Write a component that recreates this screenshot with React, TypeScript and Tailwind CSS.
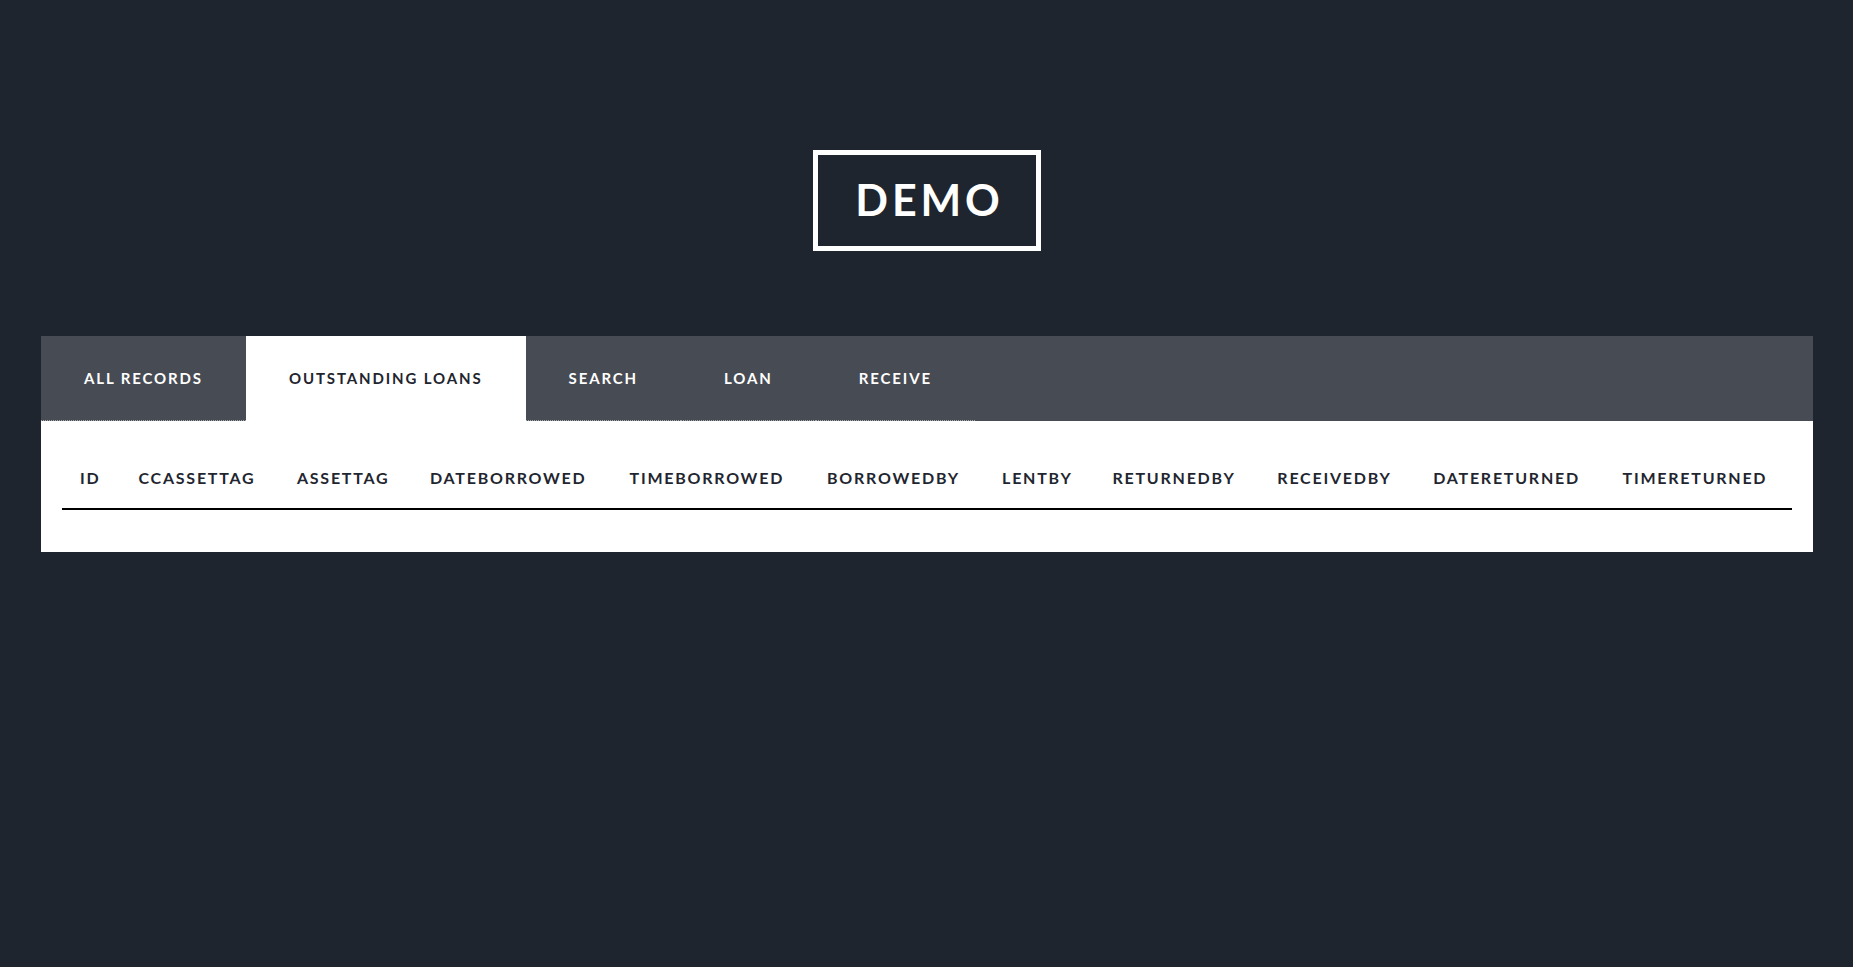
import { useState } from 'react';

const TABS = ['All Records', 'Outstanding Loans', 'Search', 'Loan', 'Receive'];

const COLUMNS = [
  'id',
  'ccassettag',
  'assettag',
  'dateborrowed',
  'timeborrowed',
  'borrowedby',
  'lentby',
  'returnedby',
  'receivedby',
  'datereturned',
  'timereturned',
];

export default function App() {
  const [active, setActive] = useState(1);

  return (
    <div
      className="min-h-screen w-full bg-[#1f252e] pt-[150px]"
      style={{ fontFamily: 'Lato, "Open Sans", sans-serif' }}
    >
      {/* Titlu */}
      <div className="flex justify-center">
        <h1 className="flex h-[101px] w-[228px] items-center justify-center border-[5px] border-white pl-[6px] text-[43px] font-bold tracking-[0.09em] text-white">
          DEMO
        </h1>
      </div>

      {/* Tab-uri + tabel */}
      <div className="ml-[41px] mr-10 mt-[85px]">
        <div className="flex h-[85px] bg-[#474b53]">
          {TABS.map((t, i) => (
            <button
              key={t}
              type="button"
              onClick={() => setActive(i)}
              className={`h-full px-[43px] text-[15px] font-bold uppercase tracking-[0.125em] ${
                i === active
                  ? 'bg-white text-[#1f252e]'
                  : 'border-b border-dotted border-[#a9abb0] text-white'
              }`}
            >
              {t}
            </button>
          ))}
        </div>

        <div className="bg-white px-[21px] pb-[42px] pt-[27px]">
          <table className="w-full border-collapse">
            <thead>
              <tr className="border-b-2 border-black">
                {COLUMNS.map((c) => (
                  <th
                    key={c}
                    className="px-[18px] pb-[18px] pt-[18px] text-left text-[16px] leading-6 font-bold uppercase tracking-[0.11em] text-[#1f2630]"
                  >
                    {c}
                  </th>
                ))}
              </tr>
            </thead>
            <tbody />
          </table>
        </div>
      </div>
    </div>
  );
}
